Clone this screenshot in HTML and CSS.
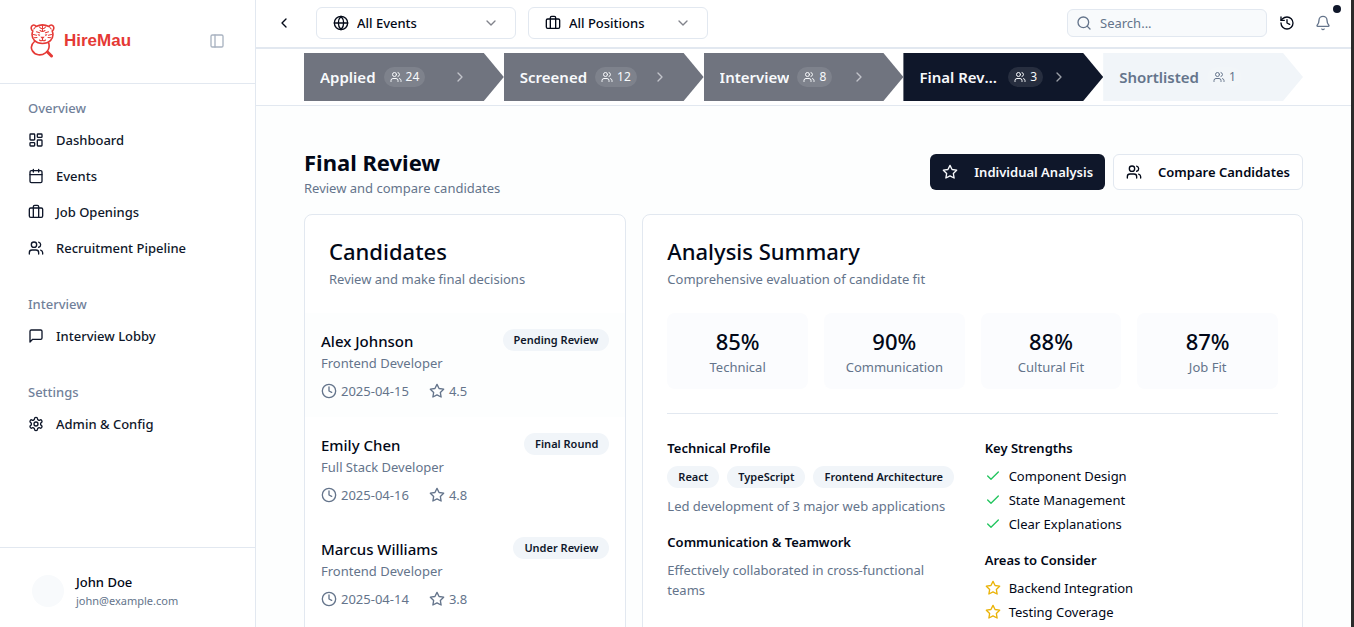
FILE: index.html
```html
<!DOCTYPE html>
<html lang="en">
<head>
<meta charset="utf-8">
<meta name="viewport" content="width=device-width, initial-scale=1">
<title>HireMau – Final Review</title>
<link rel="stylesheet" href="styles.css">
</head>
<body>
<svg class="sprite" aria-hidden="true">
  <symbol id="dashboard" viewBox="0 0 24 24"><rect width="7" height="9" x="3" y="3" rx="1"/><rect width="7" height="5" x="14" y="3" rx="1"/><rect width="7" height="9" x="14" y="12" rx="1"/><rect width="7" height="5" x="3" y="16" rx="1"/></symbol>
  <symbol id="calendar" viewBox="0 0 24 24"><path d="M8 2v4M16 2v4M3 10h18"/><rect width="18" height="18" x="3" y="4" rx="2"/></symbol>
  <symbol id="briefcase" viewBox="0 0 24 24"><path d="M16 20V4a2 2 0 0 0-2-2h-4a2 2 0 0 0-2 2v16"/><rect width="20" height="14" x="2" y="6" rx="2"/></symbol>
  <symbol id="team" viewBox="0 0 24 24"><path d="M16 21v-2a4 4 0 0 0-4-4H6a4 4 0 0 0-4 4v2"/><circle cx="9" cy="7" r="4"/><path d="M22 21v-2a4 4 0 0 0-3-3.870M16 3.130a4 4 0 0 1 0 7.750"/></symbol>
  <symbol id="message" viewBox="0 0 24 24"><path d="M21 15a2 2 0 0 1-2 2H7l-4 4V5a2 2 0 0 1 2-2h14a2 2 0 0 1 2 2z"/></symbol>
  <symbol id="settings" viewBox="0 0 24 24"><path d="M12.220 2h-.44a2 2 0 0 0-2 2v.18a2 2 0 0 1-1 1.730l-.43.25a2 2 0 0 1-2 0l-.15-.08a2 2 0 0 0-2.730.73l-.22.38a2 2 0 0 0 .73 2.730l.15.1a2 2 0 0 1 1 1.720v.51a2 2 0 0 1-1 1.740l-.15.09a2 2 0 0 0-.73 2.730l.22.38a2 2 0 0 0 2.730.73l.15-.08a2 2 0 0 1 2 0l.43.25a2 2 0 0 1 1 1.730V20a2 2 0 0 0 2 2h.44a2 2 0 0 0 2-2v-.18a2 2 0 0 1 1-1.730l.43-.25a2 2 0 0 1 2 0l.15.08a2 2 0 0 0 2.730-.73l.22-.39a2 2 0 0 0-.73-2.730l-.15-.08a2 2 0 0 1-1-1.740v-.5a2 2 0 0 1 1-1.740l.15-.09a2 2 0 0 0 .73-2.730l-.22-.38a2 2 0 0 0-2.730-.73l-.15.08a2 2 0 0 1-2 0l-.43-.25a2 2 0 0 1-1-1.730V4a2 2 0 0 0-2-2z"/><circle cx="12" cy="12" r="3"/></symbol>
  <symbol id="panel" viewBox="0 0 24 24"><rect width="18" height="18" x="3" y="3" rx="2"/><path d="M9 3v18"/></symbol>
  <symbol id="left" viewBox="0 0 24 24"><path d="m15 18-6-6 6-6"/></symbol>
  <symbol id="right" viewBox="0 0 24 24"><path d="m9 18 6-6-6-6"/></symbol>
  <symbol id="down" viewBox="0 0 24 24"><path d="m6 9 6 6 6-6"/></symbol>
  <symbol id="globe" viewBox="0 0 24 24"><circle cx="12" cy="12" r="10"/><path d="M12 2a14.500 14.500 0 0 0 0 20 14.500 14.500 0 0 0 0-20M2 12h20"/></symbol>
  <symbol id="search" viewBox="0 0 24 24"><circle cx="11" cy="11" r="8"/><path d="m21 21-4.300-4.300"/></symbol>
  <symbol id="history" viewBox="0 0 24 24"><path d="M3 12a9 9 0 1 0 9-9 9.750 9.750 0 0 0-6.740 2.740L3 8"/><path d="M3 3v5h5M12 7v5l4 2"/></symbol>
  <symbol id="bell" viewBox="0 0 24 24"><path d="M10.268 21a2 2 0 0 0 3.464 0M3.262 15.326A1 1 0 0 0 4 17h16a1 1 0 0 0 .74-1.673C19.410 13.956 18 12.499 18 8A6 6 0 0 0 6 8c0 4.499-1.411 5.956-2.738 7.326"/></symbol>
  <symbol id="star" viewBox="0 0 24 24"><path d="m12 2 3.090 6.260L22 9.270l-5 4.870 1.180 6.880L12 17.770l-6.180 3.250L7 14.140 2 9.270l6.910-1.010z"/></symbol>
  <symbol id="clock" viewBox="0 0 24 24"><circle cx="12" cy="12" r="10"/><path d="M12 6v6l4 2"/></symbol>
  <symbol id="check" viewBox="0 0 24 24"><path d="M20 6 9 17l-5-5"/></symbol>
</svg>

<div class="app">
  <aside class="sidebar">
    <div class="brand">
      <svg class="logo" viewBox="0 0 26 34" aria-hidden="true">
        <path d="M6 2.500C4.500 0 .8.800 1.200 4.300c.1 1.300.8 2.200 1.600 2.700C1.500 10.500 2 14 4.500 16.500M19 2.500c1.500-2.500 5.200-1.700 4.800 1.800-.1 1.300-.8 2.200-1.600 2.700 1.300 3.500.8 7-1.700 9.500M6 2.500c4-2 9-2 13 0"/>
        <path d="M4.500 16.500c2 2 4.800 3 8 3s6-1 8-3"/>
        <path class="fine" d="M12.500 1.500v6M9.500 3c.8 1.300 1.800 1.800 3 1.800s2.200-.5 3-1.800M10 6.500c1.500 1.200 3.500 1.200 5 0M3.800 5l1.300-1.500M21.200 5l-1.300-1.500M3.500 10.500l3 .8M4 13.800l3-.3M21.500 10.500l-3 .8M21 13.800l-3-.3M6.500 7.800l3 1M18.500 7.800l-3 1M12.500 14.500v2M9.500 16c1 1 2 1 3 .3 1 .7 2 .7 3-.3"/>
        <path class="solid" d="M10.300 12.800h4.400l-2.200 2.400zM7.500 10l2.800.8-1.200 1.400zM17.500 10l-2.800.8 1.200 1.400z"/>
        <path d="M4.500 17.500c-3 2.500-3.800 6-2.300 9 2.800 5 9 5.500 13.300 2.300 3.200-2.500 4.300-6 3.200-9.800"/>
        <path class="handle" d="m17.500 28 4 4"/>
      </svg>
      <span class="brand-name">HireMau</span>
      <button class="icon-button collapse" aria-label="Toggle sidebar"><svg class="icon"><use href="#panel"/></svg></button>
    </div>
    <nav class="nav">
      <section class="nav-group">
        <h2 class="nav-label">Overview</h2>
        <a class="nav-item" href="#"><svg class="icon"><use href="#dashboard"/></svg>Dashboard</a>
        <a class="nav-item" href="#"><svg class="icon"><use href="#calendar"/></svg>Events</a>
        <a class="nav-item" href="#"><svg class="icon"><use href="#briefcase"/></svg>Job Openings</a>
        <a class="nav-item" href="#"><svg class="icon"><use href="#team"/></svg>Recruitment Pipeline</a>
      </section>
      <section class="nav-group">
        <h2 class="nav-label">Interview</h2>
        <a class="nav-item" href="#"><svg class="icon"><use href="#message"/></svg>Interview Lobby</a>
      </section>
      <section class="nav-group">
        <h2 class="nav-label">Settings</h2>
        <a class="nav-item" href="#"><svg class="icon"><use href="#settings"/></svg>Admin &amp; Config</a>
      </section>
    </nav>
    <div class="account">
      <span class="avatar"></span>
      <div>
        <div class="account-name">John Doe</div>
        <div class="account-mail">john@example.com</div>
      </div>
    </div>
  </aside>

  <div class="main">
    <header class="topbar">
      <button class="icon-button back" aria-label="Back"><svg class="icon"><use href="#left"/></svg></button>
      <label class="picker picker-events"><svg class="icon"><use href="#globe"/></svg>
        <select aria-label="Event"><option>All Events</option></select>
        <svg class="icon arrow"><use href="#down"/></svg></label>
      <label class="picker picker-positions"><svg class="icon"><use href="#briefcase"/></svg>
        <select aria-label="Position"><option>All Positions</option></select>
        <svg class="icon arrow"><use href="#down"/></svg></label>
      <label class="search"><svg class="icon"><use href="#search"/></svg><input type="search" placeholder="Search..." aria-label="Search"></label>
      <button class="icon-button history" aria-label="History"><svg class="icon"><use href="#history"/></svg></button>
      <button class="icon-button bell" aria-label="Notifications"><svg class="icon"><use href="#bell"/></svg><span class="dot"></span></button>
    </header>

    <nav class="pipeline" aria-label="Pipeline stages">
      <button class="stage"><span class="stage-name">Applied</span><span class="count"><svg class="icon"><use href="#team"/></svg>24</span><svg class="icon next"><use href="#right"/></svg></button>
      <button class="stage"><span class="stage-name">Screened</span><span class="count"><svg class="icon"><use href="#team"/></svg>12</span><svg class="icon next"><use href="#right"/></svg></button>
      <button class="stage"><span class="stage-name">Interview</span><span class="count"><svg class="icon"><use href="#team"/></svg>8</span><svg class="icon next"><use href="#right"/></svg></button>
      <button class="stage current"><span class="stage-name">Final Review</span><span class="count"><svg class="icon"><use href="#team"/></svg>3</span><svg class="icon next"><use href="#right"/></svg></button>
      <button class="stage upcoming"><span class="stage-name">Shortlisted</span><span class="count"><svg class="icon"><use href="#team"/></svg>1</span></button>
    </nav>

    <main class="content">
      <div class="heading">
        <div>
          <h1 class="title">Final Review</h1>
          <p class="muted">Review and compare candidates</p>
        </div>
        <div class="actions">
          <button class="button primary"><svg class="icon"><use href="#star"/></svg>Individual Analysis</button>
          <button class="button"><svg class="icon"><use href="#team"/></svg>Compare Candidates</button>
        </div>
      </div>

      <div class="columns">
        <section class="card">
          <header class="card-header">
            <h2 class="card-title">Candidates</h2>
            <p class="muted">Review and make final decisions</p>
          </header>
          <article class="candidate selected">
            <div class="candidate-top"><h3 class="candidate-name">Alex Johnson</h3><span class="badge">Pending Review</span></div>
            <p class="muted">Frontend Developer</p>
            <div class="meta"><span><svg class="icon"><use href="#clock"/></svg>2025-04-15</span><span><svg class="icon"><use href="#star"/></svg>4.5</span></div>
          </article>
          <article class="candidate">
            <div class="candidate-top"><h3 class="candidate-name">Emily Chen</h3><span class="badge">Final Round</span></div>
            <p class="muted">Full Stack Developer</p>
            <div class="meta"><span><svg class="icon"><use href="#clock"/></svg>2025-04-16</span><span><svg class="icon"><use href="#star"/></svg>4.8</span></div>
          </article>
          <article class="candidate">
            <div class="candidate-top"><h3 class="candidate-name">Marcus Williams</h3><span class="badge">Under Review</span></div>
            <p class="muted">Frontend Developer</p>
            <div class="meta"><span><svg class="icon"><use href="#clock"/></svg>2025-04-14</span><span><svg class="icon"><use href="#star"/></svg>3.8</span></div>
          </article>
        </section>

        <section class="card analysis">
          <header class="card-header">
            <h2 class="card-title">Analysis Summary</h2>
            <p class="muted">Comprehensive evaluation of candidate fit</p>
          </header>
          <div class="card-body">
            <div class="stats">
              <div class="stat"><div class="stat-value">85%</div><div class="muted">Technical</div></div>
              <div class="stat"><div class="stat-value">90%</div><div class="muted">Communication</div></div>
              <div class="stat"><div class="stat-value">88%</div><div class="muted">Cultural Fit</div></div>
              <div class="stat"><div class="stat-value">87%</div><div class="muted">Job Fit</div></div>
            </div>
            <div class="details">
              <div class="detail-column">
                <section class="detail">
                  <h3 class="detail-title">Technical Profile</h3>
                  <div class="badges"><span class="badge">React</span><span class="badge">TypeScript</span><span class="badge">Frontend Architecture</span></div>
                  <p class="muted">Led development of 3 major web applications</p>
                </section>
                <section class="detail">
                  <h3 class="detail-title">Communication &amp; Teamwork</h3>
                  <p class="muted">Effectively collaborated in cross-functional teams</p>
                </section>
              </div>
              <div class="detail-column">
                <section class="detail">
                  <h3 class="detail-title">Key Strengths</h3>
                  <ul class="points good">
                    <li><svg class="icon"><use href="#check"/></svg>Component Design</li>
                    <li><svg class="icon"><use href="#check"/></svg>State Management</li>
                    <li><svg class="icon"><use href="#check"/></svg>Clear Explanations</li>
                  </ul>
                </section>
                <section class="detail">
                  <h3 class="detail-title">Areas to Consider</h3>
                  <ul class="points watch">
                    <li><svg class="icon"><use href="#star"/></svg>Backend Integration</li>
                    <li><svg class="icon"><use href="#star"/></svg>Testing Coverage</li>
                  </ul>
                </section>
              </div>
            </div>
          </div>
        </section>
      </div>
    </main>
  </div>
</div>
</body>
</html>
```
FILE: styles.css
```css
:root {
  --ink: #020817;
  --navy: #0f172a;
  --muted: #64748b;
  --line: #e2e8f0;
  --soft: #f1f5f9;
}

* { box-sizing: border-box; }

body, h1, h2, h3, p, ul { margin: 0; padding: 0; }

body {
  color: var(--ink);
  font: 13px/20px "Segoe UI", "Noto Sans", "Open Sans", sans-serif;
}

button, input, select {
  margin: 0;
  padding: 0;
  border: 0;
  background: none;
  color: inherit;
  font: inherit;
}

a { color: inherit; text-decoration: none; }
ul { list-style: none; }

.sprite { position: absolute; width: 0; height: 0; }

.icon {
  flex: none;
  width: 16px;
  height: 16px;
  fill: none;
  stroke: currentColor;
  stroke-width: 2;
  stroke-linecap: round;
  stroke-linejoin: round;
}

.app {
  display: flex;
  height: 100vh;
  overflow: hidden;
  border-right: 3px solid #2b2b2b;
  background: #fdfefe;
}

/* Sidebar */
.sidebar {
  display: flex;
  flex: none;
  flex-direction: column;
  width: 256px;
  border-right: 1px solid var(--line);
  background: #fff;
}

.brand {
  display: flex;
  align-items: center;
  height: 84px;
  padding: 0 30px 1px;
  border-bottom: 1px solid var(--line);
}

.logo {
  width: 26px;
  height: 34px;
  fill: none;
  stroke: #e53935;
  stroke-width: 1.6;
  stroke-linecap: round;
  stroke-linejoin: round;
}
.logo .fine { stroke-width: 1.1; }
.logo .solid { fill: #e53935; stroke: none; }
.logo .handle { stroke-width: 3; }

.brand-name {
  margin-left: 8px;
  color: #e53935;
  font: bold 17px/28px "Liberation Sans", Arial, sans-serif;
}

.icon-button { display: flex; align-items: center; justify-content: center; }
.collapse { margin-left: auto; color: #a9b3c1; }

.nav {
  display: flex;
  flex: 1;
  flex-direction: column;
  gap: 8px;
}
.nav-group { display: flex; flex-direction: column; gap: 4px; padding: 8px 20px; }
.nav-label {
  height: 28px;
  padding: 0 8px;
  color: #71819a;
  font-size: 13px;
  font-weight: 500;
  line-height: 32px;
}
.nav-item {
  display: flex;
  align-items: center;
  gap: 12px;
  height: 32px;
  padding: 0 8px;
  color: var(--navy);
  font-weight: 500;
}

.account {
  display: flex;
  align-items: center;
  gap: 12px;
  padding: 24px 32px 17px;
  border-top: 1px solid var(--line);
}
.avatar { width: 32px; height: 32px; border-radius: 50%; background: #f8fafc; }
.account-name { font-weight: 500; }
.account-mail { color: var(--muted); font-size: 11px; line-height: 18px; }

/* Top bar */
.topbar {
  display: flex;
  flex: none;
  align-items: center;
  height: 49px;
  padding: 0 20px 1px;
  border-bottom: 2px solid var(--line);
  background: #fff;
}
.back { width: 16px; height: 32px; }
.picker {
  display: flex;
  align-items: center;
  gap: 8px;
  height: 32px;
  padding: 0 16px;
  border: 1px solid var(--line);
  border-radius: 6px;
  font-weight: 500;
}
.picker-events { width: 200px; margin-left: 24px; }
.picker-positions { width: 180px; margin-left: 12px; }
.picker select { flex: 1; min-width: 0; appearance: none; }
.picker .arrow { color: #81838b; pointer-events: none; }

.search {
  display: flex;
  align-items: center;
  gap: 8px;
  width: 200px;
  height: 28px;
  margin-left: auto;
  padding: 0 8px;
  border: 1px solid var(--line);
  border-radius: 6px;
  background: #f8fafc;
  color: var(--muted);
}
.search input { flex: 1; min-width: 0; outline: 0; }
.search input::placeholder { color: var(--muted); opacity: 1; }
.history { margin-left: 12px; }
.bell { position: relative; margin-left: 20px; color: var(--muted); }
.dot {
  position: absolute;
  top: -10px;
  right: -10px;
  width: 8px;
  height: 8px;
  border-radius: 50%;
  background: var(--navy);
}

/* Pipeline */
.pipeline {
  display: grid;
  flex: none;
  grid-template-columns: repeat(5, 1fr);
  padding: 4px 48px;
  border-bottom: 1px solid var(--line);
  background: #fff;
}
.stage {
  display: flex;
  align-items: center;
  gap: 8px;
  min-width: 0;
  height: 48px;
  padding: 0 36px 0 16px;
  background: #70747f;
  color: #f8fafc;
  clip-path: polygon(0 0, 90% 0, 100% 50%, 90% 100%, 0 100%);
}
.stage.current { background: var(--navy); }
.stage.upcoming { background: var(--soft); color: var(--muted); }
.stage-name {
  max-width: 82px;
  overflow: hidden;
  font-size: 15px;
  font-weight: 600;
  line-height: 24px;
  text-overflow: ellipsis;
  white-space: nowrap;
}
.count {
  display: flex;
  flex: none;
  align-items: center;
  gap: 4px;
  height: 20px;
  padding: 0 6px;
  border-radius: 10px;
  background: rgb(255 255 255 / 10%);
  font-size: 12px;
}
.count .icon { width: 12px; height: 12px; }
.next { margin-left: auto; opacity: .6; }

/* Content */
.main { display: flex; flex: 1; flex-direction: column; min-width: 0; }
.content { flex: 1; min-height: 0; padding: 40px 48px; overflow: hidden; }

.heading {
  display: flex;
  align-items: center;
  justify-content: space-between;
  margin-bottom: 16px;
}
.title { font-size: 22px; font-weight: 700; line-height: 32px; }
.muted { color: var(--muted); }

.actions { display: flex; gap: 8px; }
.button {
  display: flex;
  align-items: center;
  gap: 16px;
  height: 36px;
  padding: 0 12px;
  border: 1px solid var(--line);
  border-radius: 6px;
  background: #fff;
  font-weight: 600;
}
.button.primary { border: 0; background: var(--navy); color: #f8fafc; }

.columns { display: grid; grid-template-columns: repeat(3, 1fr); gap: 16px; }
.card { border: 1px solid var(--line); border-radius: 8px; background: #fff; }
.analysis { grid-column: span 2; }
.card-header { display: flex; flex-direction: column; gap: 6px; padding: 24px; }
.card-title { font-size: 22px; font-weight: 500; line-height: 24px; }
.card-body { padding: 0 24px 24px; }

.candidate { padding: 16px; }
.candidate.selected { background: #fdfefe; }
.candidate-top { display: flex; align-items: flex-start; justify-content: space-between; height: 24px; }
.candidate-name { font-size: 15px; font-weight: 500; line-height: 24px; }
.meta { display: flex; gap: 20px; margin-top: 8px; color: var(--muted); }
.meta span { display: flex; align-items: center; gap: 4px; }

.badge {
  padding: 3px 11px;
  border-radius: 11px;
  background: var(--soft);
  color: var(--navy);
  font-size: 11px;
  font-weight: 600;
  line-height: 16px;
  white-space: nowrap;
}

.stats {
  display: grid;
  grid-template-columns: repeat(4, 1fr);
  gap: 16px;
  padding-bottom: 24px;
  border-bottom: 1px solid var(--line);
}
.stat { padding: 12px; border-radius: 8px; background: #fbfcfe; text-align: center; }
.stat-value { font-size: 22px; font-weight: 500; line-height: 32px; }

.details { display: grid; grid-template-columns: 1fr 1fr; gap: 24px; padding-top: 24px; }
.detail-column { display: flex; flex-direction: column; gap: 16px; min-width: 0; }
.detail { display: flex; flex-direction: column; gap: 8px; }
.detail-title { font-size: 13px; font-weight: 600; line-height: 20px; }
.badges { display: flex; gap: 8px; }
.points { display: flex; flex-direction: column; gap: 4px; }
.points li { display: flex; align-items: center; gap: 8px; }
.good .icon { color: #22c55e; }
.watch .icon { color: #eab308; }
```
